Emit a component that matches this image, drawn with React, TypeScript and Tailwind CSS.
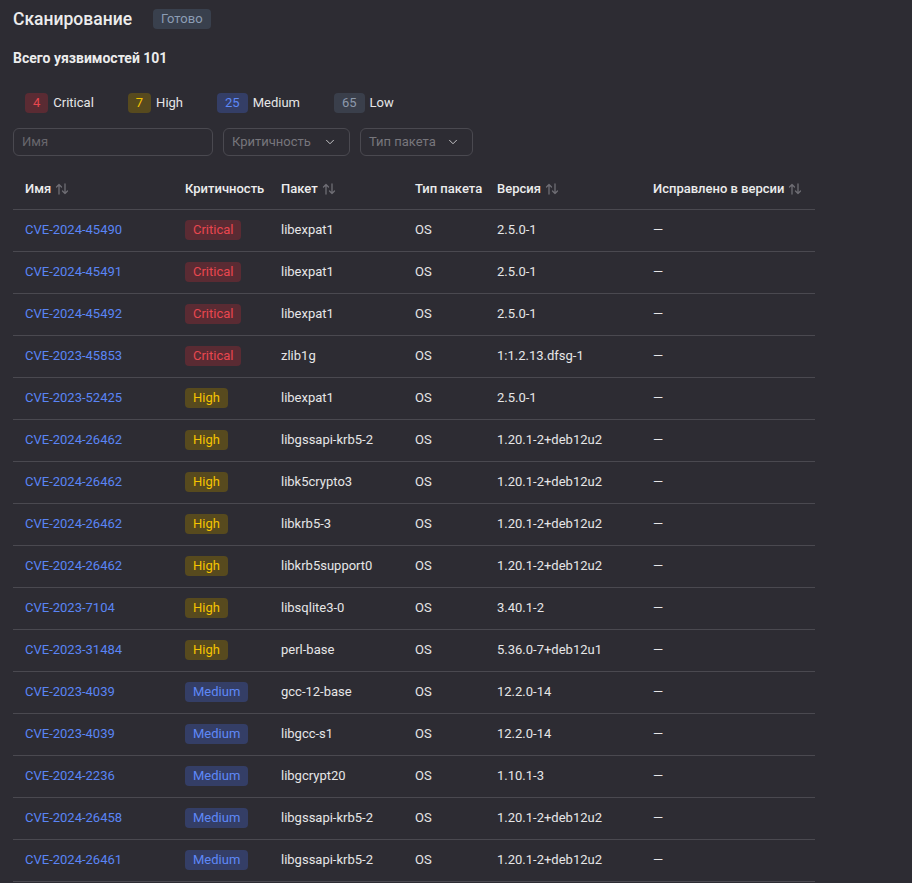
import { ChevronDown } from "lucide-react";

type Sev = "Critical" | "High" | "Medium";

const rows: { id: string; sev: Sev; pkg: string; ver: string }[] = [
  { id: "CVE-2024-45490", sev: "Critical", pkg: "libexpat1", ver: "2.5.0-1" },
  { id: "CVE-2024-45491", sev: "Critical", pkg: "libexpat1", ver: "2.5.0-1" },
  { id: "CVE-2024-45492", sev: "Critical", pkg: "libexpat1", ver: "2.5.0-1" },
  { id: "CVE-2023-45853", sev: "Critical", pkg: "zlib1g", ver: "1:1.2.13.dfsg-1" },
  { id: "CVE-2023-52425", sev: "High", pkg: "libexpat1", ver: "2.5.0-1" },
  { id: "CVE-2024-26462", sev: "High", pkg: "libgssapi-krb5-2", ver: "1.20.1-2+deb12u2" },
  { id: "CVE-2024-26462", sev: "High", pkg: "libk5crypto3", ver: "1.20.1-2+deb12u2" },
  { id: "CVE-2024-26462", sev: "High", pkg: "libkrb5-3", ver: "1.20.1-2+deb12u2" },
  { id: "CVE-2024-26462", sev: "High", pkg: "libkrb5support0", ver: "1.20.1-2+deb12u2" },
  { id: "CVE-2023-7104", sev: "High", pkg: "libsqlite3-0", ver: "3.40.1-2" },
  { id: "CVE-2023-31484", sev: "High", pkg: "perl-base", ver: "5.36.0-7+deb12u1" },
  { id: "CVE-2023-4039", sev: "Medium", pkg: "gcc-12-base", ver: "12.2.0-14" },
  { id: "CVE-2023-4039", sev: "Medium", pkg: "libgcc-s1", ver: "12.2.0-14" },
  { id: "CVE-2024-2236", sev: "Medium", pkg: "libgcrypt20", ver: "1.10.1-3" },
  { id: "CVE-2024-26458", sev: "Medium", pkg: "libgssapi-krb5-2", ver: "1.20.1-2+deb12u2" },
  { id: "CVE-2024-26461", sev: "Medium", pkg: "libgssapi-krb5-2", ver: "1.20.1-2+deb12u2" },
];

const sevClass: Record<Sev, string> = {
  Critical: "bg-[#5a2b33] text-[#e8474f]",
  High: "bg-[#574a1e] text-[#f5c400]",
  Medium: "bg-[#343e66] text-[#5e88f7]",
};

function SortIcon() {
  return (
    <svg width="14" height="14" viewBox="0 0 14 14" fill="none" className="ml-1 inline-block" aria-hidden="true">
      <path d="M4 12V2.5M1.5 5L4 2.5L6.5 5" stroke="#6e6d74" strokeWidth="1.3" strokeLinecap="round" strokeLinejoin="round" />
      <path d="M10 2v9.5M7.5 9L10 11.5L12.5 9" stroke="#6e6d74" strokeWidth="1.3" strokeLinecap="round" strokeLinejoin="round" />
    </svg>
  );
}

function Chip({ n, label, cls }: { n: string; label: string; cls: string }) {
  return (
    <div className="flex items-center gap-[5px]">
      <span className={`h-5 px-2 rounded-[4px] flex items-center text-[13px] ${cls}`}>{n}</span>
      <span className="text-[13px] text-[#e6e6e7]">{label}</span>
    </div>
  );
}

function Select({ label, width }: { label: string; width: string }) {
  return (
    <div className={`h-7 ${width} border border-[#4a4950] rounded-[6px] flex items-center justify-between pl-2 pr-3`}>
      <span className="text-[13px] text-[#77767c]">{label}</span>
      <ChevronDown size={14} strokeWidth={1.6} className="text-[#d0d0d2]" />
    </div>
  );
}

export default function App() {
  return (
    <div
      className="min-h-screen w-full bg-[#2d2c33] text-[#e6e6e7] px-[13px] pt-2 overflow-hidden"
      style={{ fontFamily: "Roboto, 'Noto Sans', sans-serif" }}
    >
      {/* Header */}
      <div className="flex items-center h-5 mt-[1px]">
        <h1 className="text-[17.5px] font-medium text-[#ececed]">Сканирование</h1>
        <span className="ml-[21px] h-5 px-2 rounded-[4px] bg-[#39404d] text-[#8c9db4] text-[13px] flex items-center">Готово</span>
      </div>

      <div className="mt-[19px] text-[14px] font-bold text-[#ececed]">Всего уязвимостей 101</div>

      {/* Summary */}
      <div className="mt-[24px] pl-3 flex items-center gap-[34px]">
        <Chip n="4" label="Critical" cls="bg-[#5a2b33] text-[#e8474f]" />
        <Chip n="7" label="High" cls="bg-[#574a1e] text-[#f5c400]" />
        <Chip n="25" label="Medium" cls="bg-[#343e66] text-[#5e88f7]" />
        <Chip n="65" label="Low" cls="bg-[#3a3f4b] text-[#8d99ab]" />
      </div>

      {/* Filters */}
      <div className="mt-[15px] flex items-center gap-[10px]">
        <div className="h-7 w-[200px] border border-[#4a4950] rounded-[6px] flex items-center px-2">
          <span className="text-[13px] text-[#68676d]">Имя</span>
        </div>
        <Select label="Критичность" width="w-[127px]" />
        <Select label="Тип пакета" width="w-[113px]" />
      </div>

      {/* Table */}
      <table className="mt-[13px] w-[802px] border-collapse text-[13px] table-fixed">
        <colgroup>
          <col className="w-[160px]" />
          <col className="w-[96px]" />
          <col className="w-[134px]" />
          <col className="w-[82px]" />
          <col className="w-[156px]" />
          <col className="w-[174px]" />
        </colgroup>
        <thead>
          <tr className="h-10 border-b border-[#4a4950] text-left text-[#ececed]">
            <th className="pl-3 font-medium"><span className="inline-flex items-center">Имя<SortIcon /></span></th>
            <th className="pl-3 font-medium whitespace-nowrap">Критичность</th>
            <th className="pl-3 font-medium"><span className="inline-flex items-center">Пакет<SortIcon /></span></th>
            <th className="pl-3 font-medium whitespace-nowrap">Тип пакета</th>
            <th className="pl-3 font-medium"><span className="inline-flex items-center">Версия<SortIcon /></span></th>
            <th className="pl-3 font-medium whitespace-nowrap"><span className="inline-flex items-center">Исправлено в версии<SortIcon /></span></th>
          </tr>
        </thead>
        <tbody>
          {rows.map((r, i) => (
            <tr key={i} className="h-[42px] border-b border-[#4a4950]">
              <td className="pl-3 text-[#5a85f5]">{r.id}</td>
              <td className="pl-3">
                <span className={`inline-flex h-5 items-center px-2 rounded-[4px] ${sevClass[r.sev]}`}>{r.sev}</span>
              </td>
              <td className="pl-3 text-[#e6e6e7]">{r.pkg}</td>
              <td className="pl-3 text-[#e6e6e7]">OS</td>
              <td className="pl-3 text-[#e6e6e7] whitespace-nowrap">{r.ver}</td>
              <td className="pl-3 text-[#e6e6e7]">—</td>
            </tr>
          ))}
        </tbody>
      </table>
    </div>
  );
}
